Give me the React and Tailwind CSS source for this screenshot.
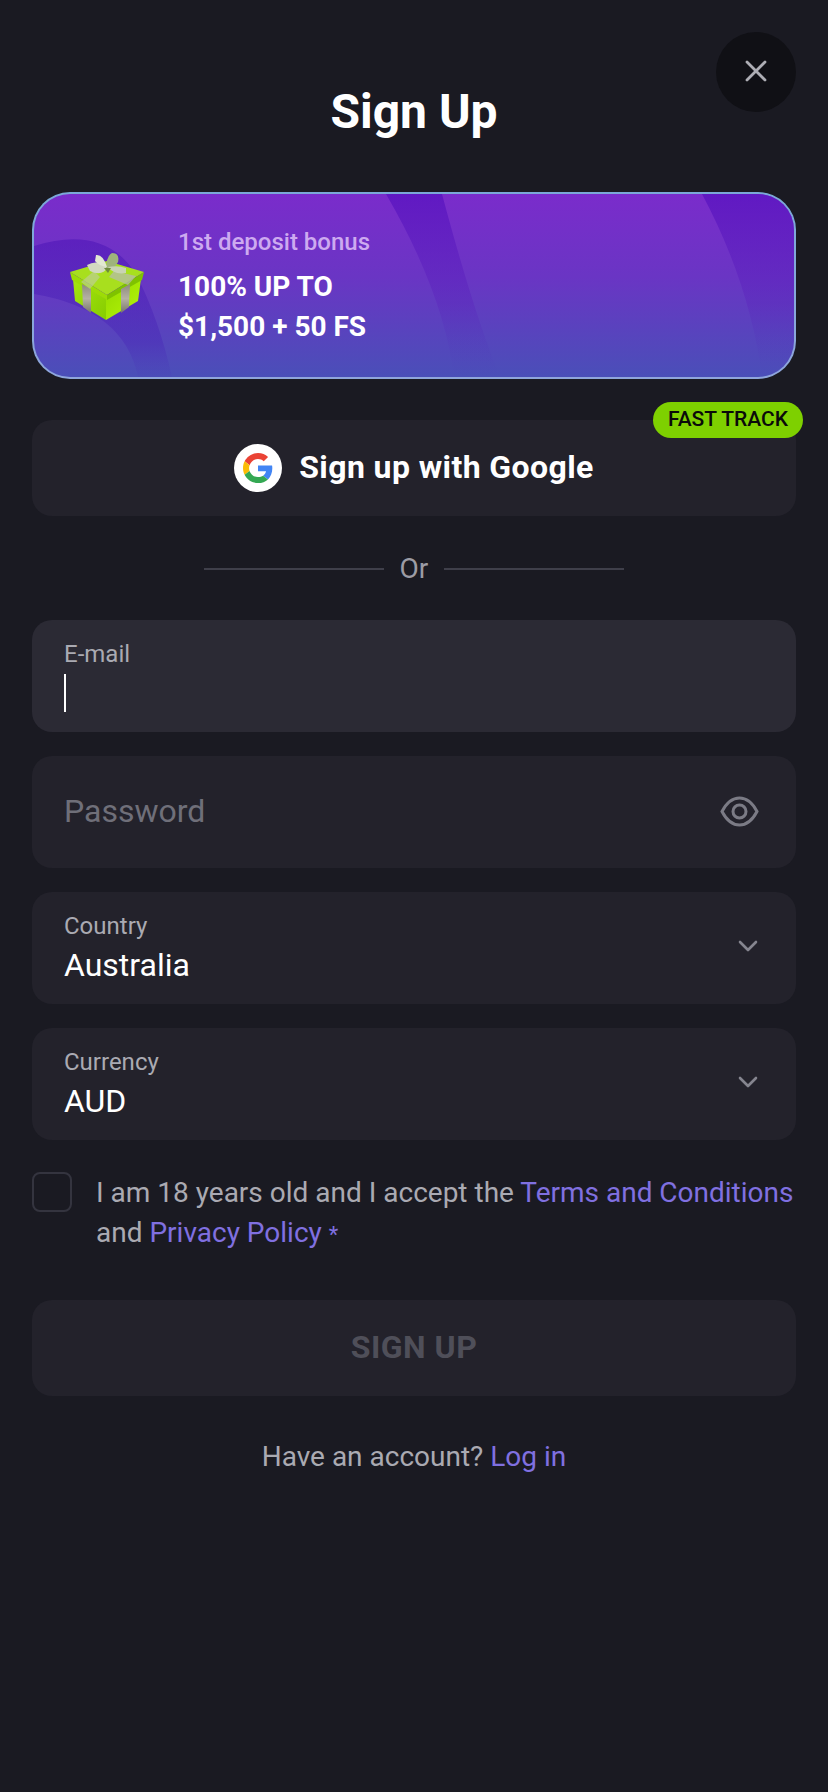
import React from "react";

function Gift() {
  return (
    <svg width="74" height="68" viewBox="0 0 74 68" className="shrink-0">
      <defs>
        <linearGradient id="gl" x1="0" y1="0" x2="1" y2="1">
          <stop offset="0" stopColor="#a5e60f" />
          <stop offset="1" stopColor="#86cc00" />
        </linearGradient>
        <linearGradient id="gr" x1="0" y1="0" x2="1" y2="1">
          <stop offset="0" stopColor="#93d800" />
          <stop offset="0.6" stopColor="#a8ea05" />
          <stop offset="1" stopColor="#b8ef20" />
        </linearGradient>
        <linearGradient id="rb" x1="0" y1="0" x2="0" y2="1">
          <stop offset="0" stopColor="#8d8a7c" />
          <stop offset="0.5" stopColor="#b5b1a4" />
          <stop offset="1" stopColor="#77766a" />
        </linearGradient>
      </defs>
      <path d="M3 26 L36 46 L36 67 L5 48 Z" fill="url(#gl)" />
      <path d="M71 26 L36 46 L36 67 L68 48 Z" fill="url(#gr)" />
      <path d="M0 19 L37 8 L74 19 L37 42 Z" fill="#a8df1e" />
      <path d="M0 19 L37 42 L37 47 L2 27 Z" fill="#9ddc06" />
      <path d="M74 19 L37 42 L37 47 L72 27 Z" fill="#7fc200" />
      <path d="M12 31 L21 36 L21 60 L13 54 Z" fill="url(#rb)" />
      <path d="M51 36 L60 31 L59 54 L51 60 Z" fill="url(#rb)" />
      <path d="M44 18 L66 23 L58 32 L39 24 Z" fill="#b7bcaa" opacity="0.75" />
      <path d="M30 24 L20 36 L11 29 L24 18 Z" fill="#c3c9b4" opacity="0.55" />
      <path d="M17 12 Q27 6 38 14 Q32 24 20 18 Z" fill="#d2d9c0" />
      <path d="M36 17 Q36 3 42 0 Q50 0 48 9 Q44 17 36 17 Z" fill="#9fb37c" />
      <path d="M26 2 Q33 1 37 14 Q29 13 25 8 Z" fill="#e2e8d2" />
      <path d="M38 14 Q48 12 56 15 L56 20 Q44 22 38 14 Z" fill="#c9d3b3" />
      <path d="M34 15 L41 15 L38 20 Z" fill="#6f8a3a" />
    </svg>
  );
}

function GoogleG() {
  return (
    <svg width="30" height="30" viewBox="0 0 48 48">
      <path fill="#EA4335" d="M24 9.5c3.5 0 6.7 1.2 9.2 3.6l6.9-6.9C35.9 2.4 30.5 0 24 0 14.6 0 6.5 5.4 2.6 13.2l8 6.2C12.4 13.7 17.7 9.5 24 9.5z" />
      <path fill="#4285F4" d="M46.9 24.5c0-1.6-.1-3.1-.4-4.5H24v9h12.9c-.6 3-2.2 5.5-4.7 7.2l7.7 6c4.5-4.2 7-10.3 7-17.7z" />
      <path fill="#FBBC05" d="M10.5 28.6c-.5-1.4-.8-3-.8-4.6s.3-3.2.8-4.6l-8-6.2C.9 16.5 0 20.1 0 24s.9 7.5 2.6 10.8l7.9-6.2z" />
      <path fill="#34A853" d="M24 48c6.5 0 11.9-2.1 15.9-5.8l-7.7-6c-2.2 1.4-4.9 2.3-8.2 2.3-6.3 0-11.6-4.2-13.5-9.9l-8 6.2C6.5 42.6 14.6 48 24 48z" />
    </svg>
  );
}

function Chevron() {
  return (
    <svg width="20" height="12" viewBox="0 0 20 12" fill="none" className="shrink-0">
      <path d="M2 2 L10 10 L18 2" stroke="#85858f" strokeWidth="2.6" strokeLinecap="round" strokeLinejoin="round" />
    </svg>
  );
}

function SelectField({ label, value }) {
  return (
    <div className="h-28 rounded-[20px] bg-[#23222b] pl-8 pr-[38px] pb-1 flex items-center justify-between">
      <div className="flex flex-col">
        <span className="text-[24px] leading-9 text-[#aaaab2]">{label}</span>
        <span className="mt-[1px] text-[32px] leading-10 text-white">{value}</span>
      </div>
      <Chevron />
    </div>
  );
}

export default function App() {
  return (
    <div className="relative min-h-[1792px] bg-[#1a1a22] px-8 font-['Roboto',sans-serif] overflow-hidden">
      <button className="absolute right-8 top-8 w-20 h-20 rounded-full bg-[#101015] flex items-center justify-center pb-[3px]">
        <svg width="22" height="22" viewBox="0 0 22 22" fill="none">
          <path d="M2 2 L20 20 M20 2 L2 20" stroke="#aeaeb5" strokeWidth="2.8" strokeLinecap="round" />
        </svg>
      </button>

      <h1 className="pt-[77px] pb-[45px] text-center text-[48px] leading-[70px] font-bold text-white">Sign Up</h1>

      <div className="rounded-[38px] p-[2px] bg-[linear-gradient(180deg,#7ba8d8_0%,#8fa6dc_100%)] h-[187px]">
        <div className="relative h-full rounded-[36px] overflow-hidden bg-[linear-gradient(180deg,#7a2ccb_0%,#6a35c4_45%,#4a4fb8_100%)] flex items-center pl-[36px]">
          <svg className="absolute inset-0 w-full h-full" viewBox="0 0 760 183" preserveAspectRatio="none" fill="none">
            <defs>
              <linearGradient id="sw" x1="0" y1="0" x2="0" y2="1">
                <stop offset="0" stopColor="#5a14c0" stopOpacity="0.8" />
                <stop offset="0.6" stopColor="#5a20bc" stopOpacity="0.35" />
                <stop offset="1" stopColor="#4a40b8" stopOpacity="0" />
              </linearGradient>
              <linearGradient id="sw2" x1="0" y1="0" x2="0" y2="1">
                <stop offset="0" stopColor="#4f16b8" stopOpacity="0.6" />
                <stop offset="0.75" stopColor="#4a2bb8" stopOpacity="0.5" />
                <stop offset="1" stopColor="#4a40b8" stopOpacity="0.2" />
              </linearGradient>
            </defs>
            <path d="M352 0 L408 0 Q440 120 466 183 L420 183 Q410 100 352 0 Z" fill="url(#sw)" />
            <path d="M668 0 L760 0 L760 183 L728 183 Q716 90 668 0 Z" fill="url(#sw)" />
            <path d="M0 52 Q70 30 102 80 Q125 125 138 183 L104 183 Q90 115 0 100 Z" fill="url(#sw2)" />
          </svg>
          <div className="relative shrink-0 w-[74px] h-[68px] mt-[2px]"><Gift /></div>
          <div className="relative ml-[34px] flex flex-col">
            <span className="text-[24px] leading-9 font-medium text-[#cdaaf0]">1st deposit bonus</span>
            <span className="mt-[7px] text-[28px] leading-10 font-bold text-white">100% UP TO</span>
            <span className="text-[28px] leading-10 font-bold text-white">$1,500 + 50 FS</span>
          </div>
        </div>
      </div>

      <div className="relative mt-[41px] h-24 rounded-[20px] bg-[#23222b] flex items-center justify-center gap-[17px]">
        <div className="w-12 h-12 rounded-full bg-white flex items-center justify-center"><GoogleG /></div>
        <span className="pb-[2px] text-[32px] font-bold tracking-[0.4px] text-white">Sign up with Google</span>
        <span className="absolute -right-[7px] -top-[18px] h-9 w-[150px] rounded-full bg-[#7ed000] flex items-center justify-center text-[21px] font-medium text-[#0a0a0a]">FAST TRACK</span>
      </div>

      <div className="h-[104px] pt-[2px] flex items-center justify-center gap-4">
        <div className="w-[180px] h-[2px] bg-[#3f3f4a]" />
        <span className="text-[28px] text-[#9c9ca5]">Or</span>
        <div className="w-[180px] h-[2px] bg-[#3f3f4a]" />
      </div>

      <div className="flex flex-col gap-6">
        <div className="h-28 rounded-[20px] bg-[#2b2a34] pl-8 pt-4 flex flex-col">
          <span className="text-[24px] leading-9 text-[#aaaab2]">E-mail</span>
          <div className="mt-[2px] w-[2px] h-[38px] bg-white" />
        </div>
        <div className="h-28 rounded-[20px] bg-[#23222b] pl-8 pr-[37px] pb-[2px] flex items-center justify-between">
          <span className="text-[32px] text-[#6f6f79]">Password</span>
          <svg width="39" height="31" viewBox="0 0 39 31" fill="none">
            <path d="M2 15.5 C7 6 13 2 19.5 2 C26 2 32 6 37 15.5 C32 25 26 29 19.5 29 C13 29 7 25 2 15.5 Z" stroke="#7b7b85" strokeWidth="3" />
            <circle cx="19.5" cy="15.5" r="6.5" stroke="#7b7b85" strokeWidth="3" />
          </svg>
        </div>
        <SelectField label="Country" value="Australia" />
        <SelectField label="Currency" value="AUD" />
      </div>

      <div className="mt-8 flex items-start gap-6">
        <div className="w-10 h-10 shrink-0 rounded-[8px] border-2 border-[#34343f]" />
        <p className="mt-[1px] text-[28px] leading-10 text-[#aaaab2] whitespace-nowrap">
          I am 18 years old and I accept the <span className="text-[#8070e0]">Terms and Conditions</span>
          <br />
          and <span className="text-[#8070e0]">Privacy Policy</span> <span className="text-[#8070e0] text-[22px]">*</span>
        </p>
      </div>

      <button className="mt-[45px] w-full h-24 pb-[2px] rounded-[20px] bg-[#23222b] text-[32px] font-bold tracking-[0.5px] text-[#4f4f59]">SIGN UP</button>

      <p className="mt-[41px] text-center text-[28px] leading-10 text-[#aaaab2]">
        Have an account? <span className="text-[#8070e0]">Log in</span>
      </p>
    </div>
  );
}
